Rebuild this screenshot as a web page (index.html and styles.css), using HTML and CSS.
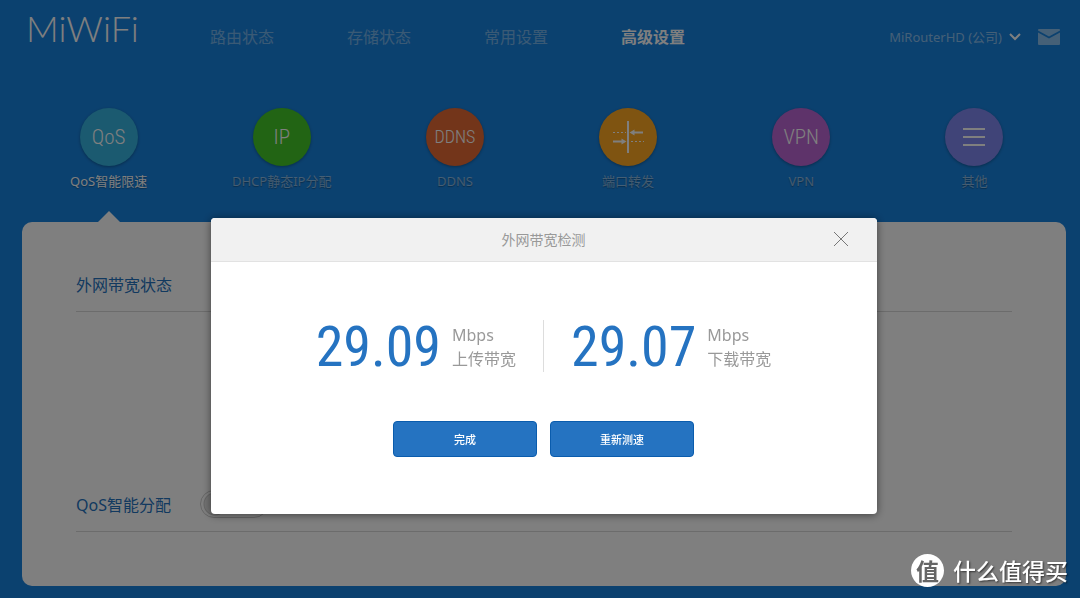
FILE: index.html
```html
<!DOCTYPE html>
<html lang="zh-CN">
<head>
<meta charset="utf-8">
<meta name="viewport" content="width=device-width, initial-scale=1">
<title>MiWiFi</title>
<link rel="stylesheet" href="styles.css">
</head>
<body>
<div class="page">
  <header class="topbar">
    <a class="logo" href="#">MiWiFi</a>
    <nav class="nav">
      <a class="nav-link" href="#">路由状态</a>
      <a class="nav-link" href="#">存储状态</a>
      <a class="nav-link" href="#">常用设置</a>
      <a class="nav-link nav-link-active" href="#">高级设置</a>
    </nav>
    <div class="account">
      <button class="router" type="button">MiRouterHD (公司)
        <svg class="chevron" viewBox="0 0 12 8" aria-hidden="true"><path d="M1 1l5 5 5-5"/></svg>
      </button>
      <button class="mail" type="button" aria-label="消息">
        <svg viewBox="0 0 22 16" aria-hidden="true"><path d="M1 0h20q1 0 1 1v.4L11 7.500 0 1.400V1q0-1 1-1z"/><path d="M0 3.400l11 6.100 11-6.100V15q0 1-1 1H1q-1 0-1-1z"/></svg>
      </button>
    </div>
  </header>

  <nav class="tabs">
    <a class="tab tab-active" href="#"><span class="disc disc-qos">QoS</span><span>QoS智能限速</span></a>
    <a class="tab" href="#"><span class="disc disc-ip">IP</span><span>DHCP静态IP分配</span></a>
    <a class="tab" href="#"><span class="disc disc-ddns">DDNS</span><span>DDNS</span></a>
    <a class="tab" href="#"><span class="disc disc-port">
      <svg class="glyph" viewBox="0 0 34 34" aria-hidden="true">
        <path class="stroke" d="M17 1v32M32 12.500H22M2 21.500h11"/>
        <path class="dots" d="M2 12.500h13M20 21.500h13"/>
        <path class="fill" d="M18.500 12.500l5-3v6zM15.500 21.500l-5-3v6z"/>
      </svg></span><span>端口转发</span></a>
    <a class="tab" href="#"><span class="disc disc-vpn">VPN</span><span>VPN</span></a>
    <a class="tab" href="#"><span class="disc disc-more">
      <svg class="glyph" viewBox="0 0 34 34" aria-hidden="true"><path class="stroke" d="M6 9h22M6 17h22M6 25h22"/></svg></span><span>其他</span></a>
  </nav>

  <main class="panel">
    <section class="section">
      <h2 class="section-title">外网带宽状态</h2>
    </section>
    <section class="section">
      <h2 class="section-title"><label for="qos">QoS智能分配</label><input class="switch" id="qos" type="checkbox"></h2>
    </section>
  </main>
</div>

<div class="overlay">
  <div class="dialog" role="dialog" aria-modal="true" aria-labelledby="dialog-title">
    <div class="dialog-head">
      <h1 class="dialog-title" id="dialog-title">外网带宽检测</h1>
      <button class="close" type="button" aria-label="关闭">
        <svg viewBox="0 0 16 16" aria-hidden="true"><path d="M1 1l14 14M15 1L1 15"/></svg>
      </button>
    </div>
    <div class="dialog-body">
      <div class="results">
        <div class="result"><span class="value">29.09</span><span class="unit">Mbps<br>上传带宽</span></div>
        <div class="result"><span class="value">29.07</span><span class="unit">Mbps<br>下载带宽</span></div>
      </div>
      <div class="actions">
        <button class="button" type="button">完成</button>
        <button class="button" type="button">重新测速</button>
      </div>
    </div>
  </div>
</div>

<div class="watermark"><span class="seal">值</span><span>什么值得买</span></div>
</body>
</html>
```
FILE: styles.css
```css
* { box-sizing: border-box; }

body {
  margin: 0;
  background: #1782de;
  color: #fff;
  font-family: "Noto Sans", "Noto Sans CJK SC", sans-serif;
  font-size: 12px;
}

a { color: inherit; text-decoration: none; }

button {
  margin: 0;
  padding: 0;
  border: 0;
  background: none;
  color: inherit;
  font: inherit;
}

svg { display: block; }

.page {
  display: flex;
  flex-direction: column;
  min-height: 100vh;
  padding: 0 14px 12px 22px;
}

.topbar {
  display: flex;
  align-items: center;
  height: 72px;
  padding: 2px 6px 0 4px;
}

.logo {
  width: 184px;
  padding-bottom: 18px;
  font-family: Lato, sans-serif;
  font-size: 36px;
  font-weight: 300;
  line-height: 40px;
}

.nav {
  display: flex;
  gap: 73px;
  font-size: 16px;
  line-height: 24px;
}

.nav-link { opacity: 0.4; }
.nav-link-active { font-weight: 700; opacity: 1; }

.account {
  display: flex;
  align-items: center;
  gap: 17px;
  margin-left: auto;
}

.router {
  display: flex;
  align-items: center;
  gap: 7px;
  color: rgba(255, 255, 255, 0.5);
  font-size: 13px;
  line-height: 20px;
}

.chevron {
  width: 12px;
  height: 8px;
  fill: none;
  stroke: #fff;
  stroke-width: 2;
}

.mail svg {
  width: 22px;
  height: 16px;
  fill: rgba(255, 255, 255, 0.5);
}

.tabs {
  display: grid;
  grid-template-columns: repeat(6, 1fr);
  height: 150px;
  padding-top: 36px;
  padding-right: 5px;
}

.tab {
  position: relative;
  display: flex;
  flex-direction: column;
  align-items: center;
  gap: 5px;
  color: rgba(255, 255, 255, 0.5);
  font-size: 13px;
  line-height: 20px;
  text-shadow: 0 1px 1px rgba(0, 0, 0, 0.3);
}

.tab-active { color: #fff; }

.tab-active::after {
  content: "";
  position: absolute;
  bottom: 0;
  border: 11px solid transparent;
  border-top: 0;
  border-bottom-color: #fff;
}

.disc {
  display: flex;
  align-items: center;
  justify-content: center;
  width: 58px;
  height: 58px;
  border-radius: 50%;
  box-shadow: 0 1px 3px rgba(0, 0, 0, 0.3);
  color: #fff;
  font-family: "Roboto Condensed", sans-serif;
  font-size: 21px;
  font-weight: 300;
  text-shadow: none;
}

.disc-qos { background: #36b4e0; }
.disc-ip { background: #44c828; }
.disc-ddns { background: #e66a34; font-size: 18px; }
.disc-port { background: #ffa822; }
.disc-vpn { background: #bc66d4; }
.disc-more { background: #8088f0; }

.glyph { width: 34px; height: 34px; fill: none; stroke: #fff; stroke-width: 2; }
.glyph .dots { stroke-dasharray: 2 2; stroke-width: 1; }
.glyph .fill { fill: #fff; stroke: none; }

.panel {
  flex: 1;
  padding: 38px 54px 0;
  border-radius: 10px;
  background: #fff;
}

.section { min-height: 220px; }
.section + .section { min-height: 52px; }

.section-title {
  display: flex;
  align-items: center;
  gap: 29px;
  height: 52px;
  margin: 0;
  padding-bottom: 4px;
  border-bottom: 1px solid #d8d8d8;
  color: #2573bf;
  font-size: 16px;
  font-weight: 400;
}

.switch {
  appearance: none;
  width: 68px;
  height: 28px;
  margin: 0;
  border: 1px solid #ccc;
  border-radius: 14px;
  background: radial-gradient(circle at 14px 13px, #e6e6e6 10px, #ccc 11px, transparent 12px);
}

.overlay {
  position: fixed;
  inset: 0;
  display: flex;
  align-items: flex-start;
  justify-content: center;
  padding-top: 218px;
  padding-left: 7px;
  background: rgba(0, 0, 0, 0.5);
}

.dialog {
  width: 666px;
  max-width: 90%;
  overflow: hidden;
  border-radius: 4px;
  background: #fff;
  box-shadow: 0 1px 8px rgba(0, 0, 0, 0.5);
  color: #999;
}

.dialog-head {
  display: grid;
  grid-template-columns: 1fr auto 1fr;
  align-items: center;
  height: 44px;
  padding: 0 28px 2px;
  border-bottom: 1px solid #e2e2e2;
  background: #f1f1f1;
}

.dialog-title {
  grid-column: 2;
  margin: 0;
  font-size: 14px;
  font-weight: 400;
}

.close { justify-self: end; }
.close svg { width: 16px; height: 16px; fill: none; stroke: #777; }

.dialog-body { padding: 58px 0 57px; }

.results {
  display: flex;
  justify-content: center;
}

.result {
  display: flex;
  align-items: center;
  gap: 11px;
  height: 52px;
  padding: 2px 27px 0;
}

.result + .result { border-left: 1px solid #ddd; }

.value {
  min-width: 124px;
  color: #2573c1;
  font-family: "Roboto Condensed", sans-serif;
  font-size: 56px;
  font-weight: 400;
  line-height: 52px;
}

.unit { font-size: 16px; line-height: 24px; }

.actions {
  display: flex;
  justify-content: center;
  gap: 13px;
  margin-top: 49px;
}

.button {
  width: 144px;
  height: 36px;
  border: 1px solid #0a5cad;
  border-radius: 4px;
  background: #2573c1;
  color: #fff;
  font-size: 11px;
  font-weight: 500;
}

.watermark {
  position: fixed;
  right: 12px;
  bottom: 11px;
  display: flex;
  align-items: center;
  gap: 9px;
  font-family: "Noto Sans CJK SC", sans-serif;
  font-size: 23px;
  font-weight: 500;
  line-height: 34px;
  text-shadow: 1px 1px 2px rgba(0, 0, 0, 0.6);
}

.seal {
  width: 33px;
  height: 33px;
  border-radius: 50%;
  background: #fff;
  color: #666;
  font-weight: 700;
  line-height: 32px;
  text-align: center;
  text-shadow: none;
}
```
